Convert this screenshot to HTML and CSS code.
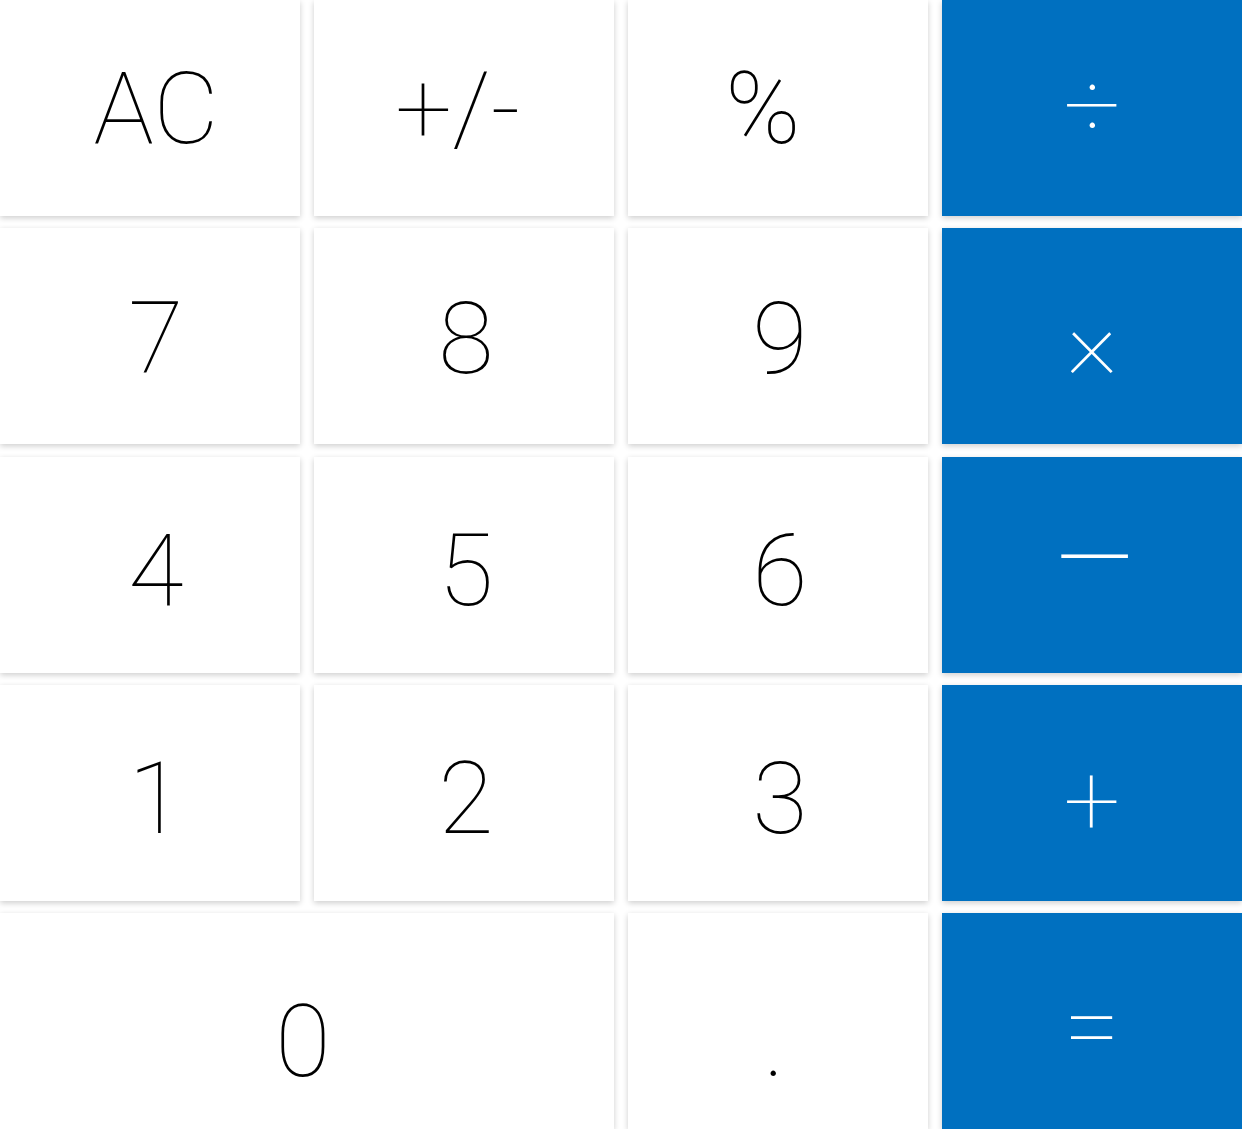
FILE: index.html
```html
<!DOCTYPE html>
<html>
<head>
<meta charset="utf-8">
<link rel="stylesheet" href="styles.css">
</head>
<body>
<div class="calc">
  <div class="key c1">AC</div>
  <div class="key sign">+/-</div>
  <div class="key pct">%</div>
  <div class="key op op-div">÷</div>
  <div class="key c1 r2">7</div>
  <div class="key c2 r2">8</div>
  <div class="key c3 r2">9</div>
  <div class="key op op-mul">×</div>
  <div class="key c1 r3">4</div>
  <div class="key c2 r3">5</div>
  <div class="key c3 r3">6</div>
  <div class="key op op-sub">–</div>
  <div class="key c1 r4">1</div>
  <div class="key c2 r4">2</div>
  <div class="key c3 r4">3</div>
  <div class="key op op-add">+</div>
  <div class="key zero last">0</div>
  <div class="key dot last">.</div>
  <div class="key op op-eq">=</div>
</div>
</body>
</html>
```
FILE: styles.css
```css
html, body {
  margin: 0;
  padding: 0;
  background: #ffffff;
  overflow: hidden;
}
.calc {
  width: 1242px;
  height: 1129px;
  display: grid;
  grid-template-columns: repeat(4, 300px);
  grid-template-rows: repeat(5, 216px);
  column-gap: 14px;
  row-gap: 12.25px;
  font-family: Roboto, "Liberation Sans", sans-serif;
  font-weight: 100;
  font-size: 101px;
  color: #000;
}
.key {
  background: #fff;
  box-shadow: 0 2px 6px rgba(0, 0, 0, 0.2);
  display: flex;
  align-items: center;
  justify-content: center;
  line-height: 1;
}
.c1 { padding-left: 12px; }
.c2 { padding-left: 4px; }
.c3 { padding-left: 4px; }
.sign { padding-right: 12px; }
.pct { padding-right: 30px; }
.r2 { padding-top: 4px; }
.r3 { padding-top: 12px; }
.r4 { padding-top: 12px; }
.zero {
  grid-column: span 2;
  padding-right: 8px;
}
.dot { padding-right: 8px; }
.last { padding-top: 40px; }
.op {
  background: #0070c0;
  color: #fff;
}
.op-div { padding-bottom: 6px; }
.op-mul { padding-top: 4px; }
.op-sub {
  font-size: 136px;
  padding-bottom: 10px;
  padding-left: 6px;
}
.op-add { padding-top: 16px; }
.op-eq { padding-top: 8px; }
```
